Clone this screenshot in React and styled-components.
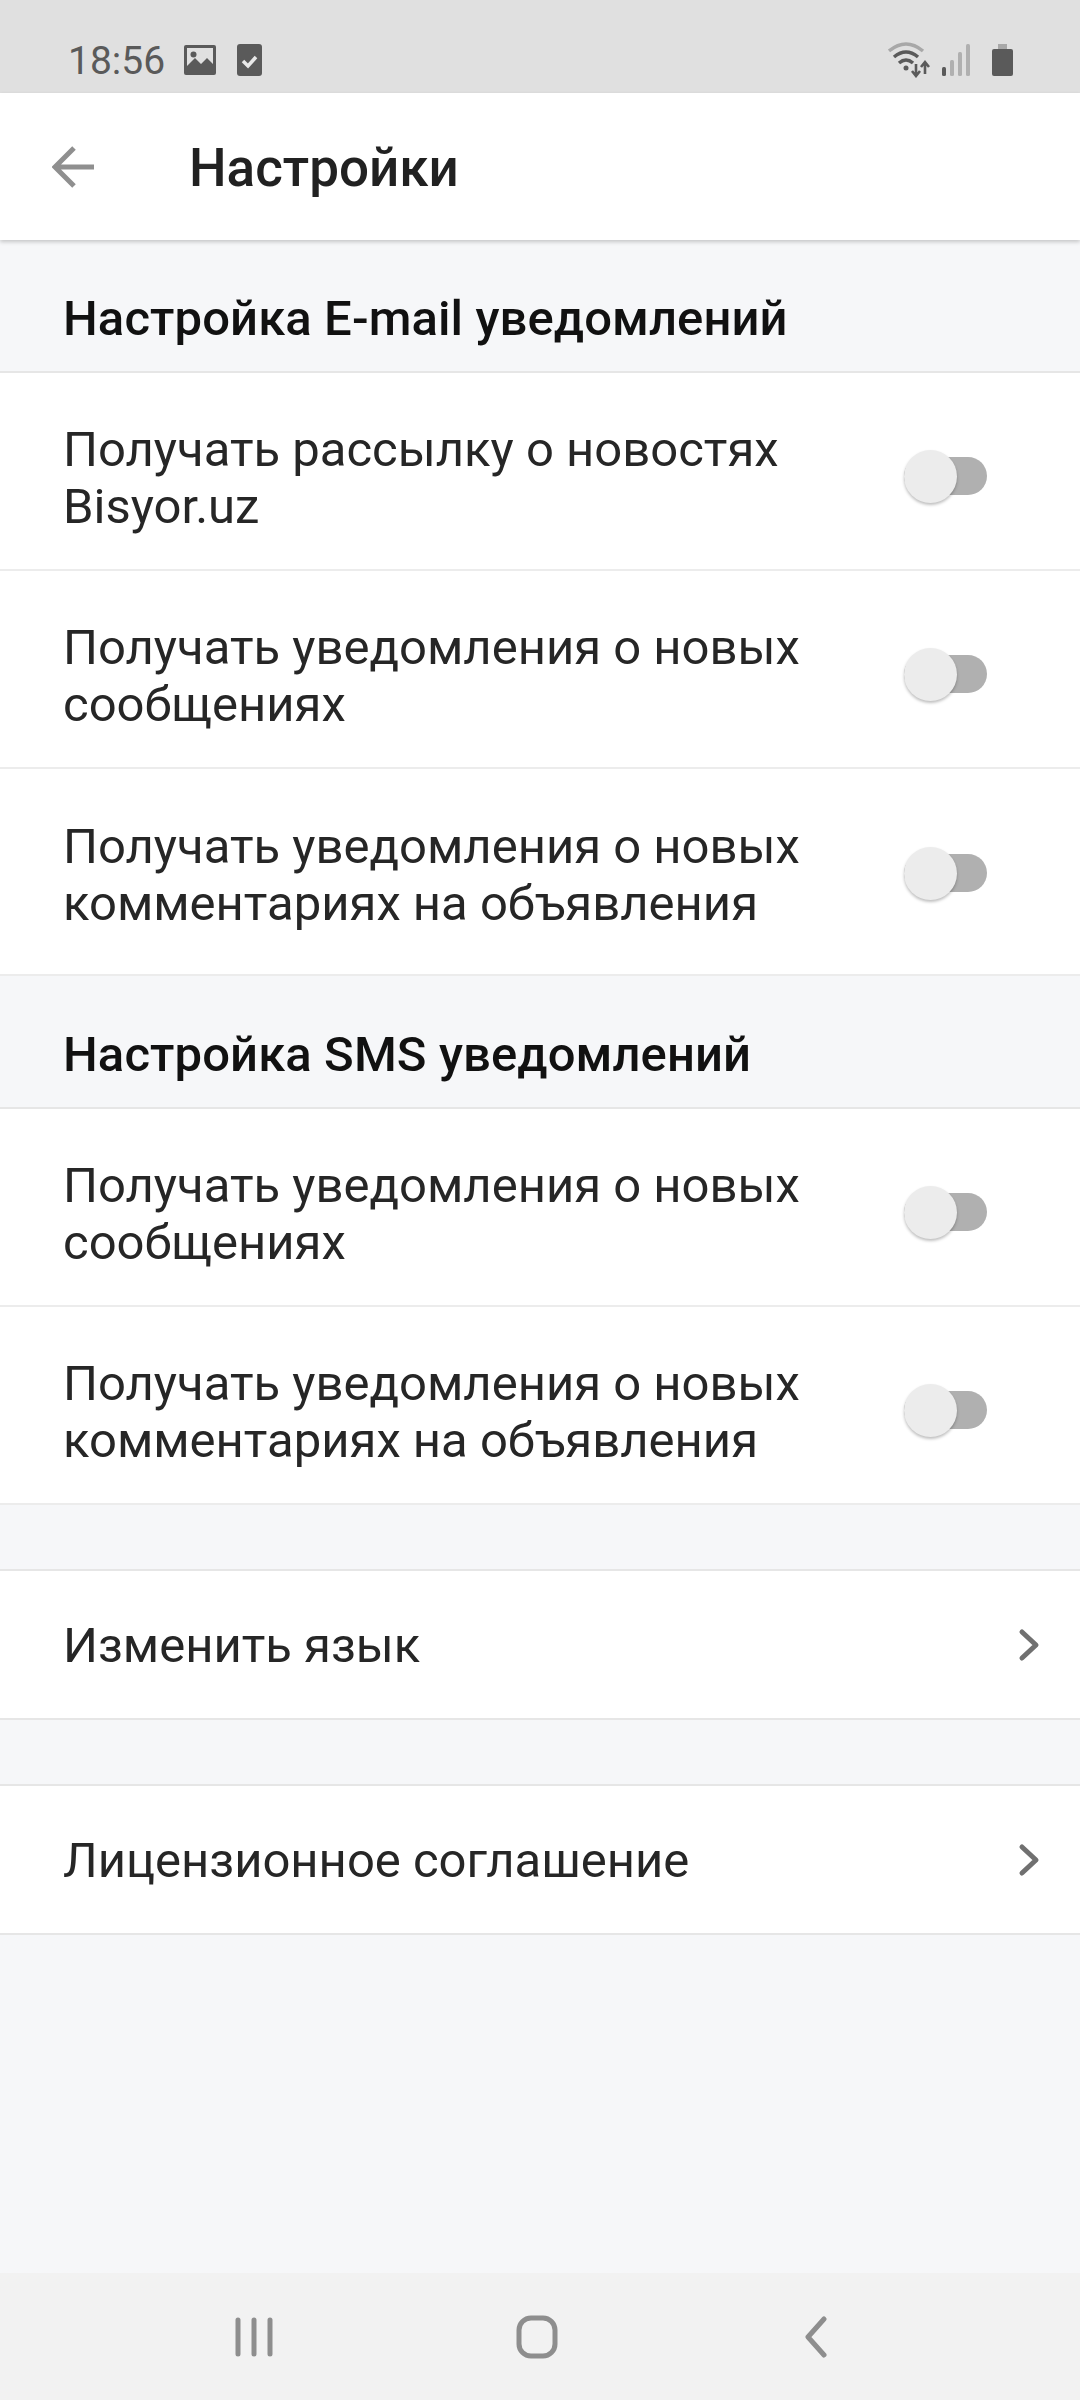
import React from 'react';
import styled, { createGlobalStyle } from 'styled-components';

const GlobalStyle = createGlobalStyle`
  html, body {
    margin: 0;
    padding: 0;
    background: #f6f7f9;
    font-family: Roboto, "Noto Sans", sans-serif;
  }
`;

const Toggle = () => (
    <Switch>
        <Knob />
    </Switch>
);

const Chevron = () => (
    <svg width="30" height="36" viewBox="0 0 30 36">
        <path d="M6 5 L20 18 L6 31" fill="none" stroke="#707070" strokeWidth="5" strokeLinecap="round" strokeLinejoin="round" />
    </svg>
);

const SwitchRow = ({ text, tall }) => (
    <Row $tall={tall}>
        <RowText>{text}</RowText>
        <Toggle />
    </Row>
);

const LinkRow = ({ text }) => (
    <Link>
        <LinkText>{text}</LinkText>
        <Chevron />
    </Link>
);

const App = () => {
    return (
        <Screen>
            <GlobalStyle />
            <StatusBar>
                <Time>18:56</Time>
                <svg width="32" height="30" viewBox="0 0 32 30" style={{ marginLeft: 19 }}>
                    <rect width="32" height="30" rx="2" fill="#5a5a5a" />
                    <rect x="3" y="3" width="26" height="20" fill="#e0e0e0" />
                    <circle cx="9.5" cy="9.5" r="3" fill="#5a5a5a" />
                    <path d="M3 21 L11 13 L17 19 L23 13 L29 19 V24 H3 Z" fill="#5a5a5a" />
                </svg>
                <svg width="25" height="32" viewBox="0 0 25 32" style={{ marginLeft: 21 }}>
                    <rect width="25" height="32" rx="3" fill="#5a5a5a" />
                    <path d="M6 17 L11 22 L19 13" fill="none" stroke="#e8e8e8" strokeWidth="3.5" />
                </svg>
                <StatusRight>
                    <svg width="44" height="36" viewBox="0 0 44 36">
                        <path d="M1 9 Q18 -5 35 9" fill="none" stroke="#a8a8a8" strokeWidth="3.5" />
                        <path d="M6 15 Q18 5 30 15" fill="none" stroke="#5a5a5a" strokeWidth="3.5" />
                        <path d="M11 21 Q18 15 25 21" fill="none" stroke="#5a5a5a" strokeWidth="3.5" />
                        <circle cx="18" cy="26" r="2.5" fill="#5a5a5a" />
                        <path d="M28 22 V34 M24 29 L28 34 L32 29" fill="none" stroke="#5a5a5a" strokeWidth="2.6" />
                        <path d="M37 32 V20 M33 25 L37 20 L41 25" fill="none" stroke="#5a5a5a" strokeWidth="2.6" />
                    </svg>
                    <svg width="30" height="32" viewBox="0 0 30 32" style={{ marginLeft: 10 }}>
                        <rect x="0" y="23" width="4" height="9" rx="1.5" fill="#5a5a5a" />
                        <rect x="8" y="16" width="4" height="16" rx="1.5" fill="#b0b0b0" />
                        <rect x="16" y="8" width="4" height="24" rx="1.5" fill="#b0b0b0" />
                        <rect x="24" y="0" width="4" height="32" rx="1.5" fill="#b0b0b0" />
                    </svg>
                    <svg width="21" height="32" viewBox="0 0 21 32" style={{ marginLeft: 20 }}>
                        <rect x="6" y="0" width="9" height="6" fill="#a8a8a8" />
                        <rect x="0" y="5" width="21" height="27" rx="2" fill="#5a5a5a" />
                    </svg>
                </StatusRight>
            </StatusBar>

            <AppBar>
                <svg width="42" height="42" viewBox="0 0 42 42">
                    <path d="M42 21 H3 M22 2 L3 21 L22 40" fill="none" stroke="#8f8f8f" strokeWidth="5" />
                </svg>
                <Title>Настройки</Title>
            </AppBar>

            <Section>Настройка E-mail уведомлений</Section>
            <SwitchRow text={<>Получать рассылку о новостях<br />Bisyor.uz</>} />
            <SwitchRow text={<>Получать уведомления о новых<br />сообщениях</>} />
            <SwitchRow tall text={<>Получать уведомления о новых<br />комментариях на объявления</>} />

            <Section>Настройка SMS уведомлений</Section>
            <SwitchRow text={<>Получать уведомления о новых<br />сообщениях</>} />
            <SwitchRow text={<>Получать уведомления о новых<br />комментариях на объявления</>} />

            <Gap />
            <LinkRow text="Изменить язык" />
            <Gap />
            <LinkRow text="Лицензионное соглашение" />

            <Spacer />

            <NavBar>
                <svg width="40" height="40" viewBox="0 0 40 40">
                    <path d="M4 3 V37 M20 3 V37 M36 3 V37" stroke="#8e8e8e" strokeWidth="5" strokeLinecap="round" />
                </svg>
                <svg width="42" height="44" viewBox="0 0 42 44">
                    <rect x="3" y="3" width="36" height="38" rx="12" fill="none" stroke="#8e8e8e" strokeWidth="5" />
                </svg>
                <svg width="24" height="42" viewBox="0 0 24 42" style={{ marginLeft: 4 }}>
                    <path d="M20 3 L4 21 L20 39" fill="none" stroke="#8e8e8e" strokeWidth="5" strokeLinecap="round" strokeLinejoin="round" />
                </svg>
            </NavBar>
        </Screen>
    );
};

const Screen = styled.div`
  width: 1080px;
  height: 2400px;
  display: flex;
  flex-direction: column;
  background: #f6f7f9;
  overflow: hidden;
`;

const StatusBar = styled.div`
  height: 93px;
  flex: none;
  box-sizing: border-box;
  padding: 26px 36px 0 68px;
  display: flex;
  align-items: center;
  background: #e0e0e0;
`;

const Time = styled.span`
  margin-top: 3px;
  font-size: 39px;
  color: #5a5a5a;
`;

const StatusRight = styled.div`
  margin-left: auto;
  display: flex;
  align-items: center;
  margin-right: 31px;
`;

const AppBar = styled.div`
  height: 147px;
  flex: none;
  box-sizing: border-box;
  padding: 0 0 0 52px;
  display: flex;
  align-items: center;
  background: #fff;
  box-shadow: 0 2px 4px rgba(0, 0, 0, 0.2);
  position: relative;
`;

const Title = styled.h1`
  margin: 2px 0 0 95px;
  font-size: 53px;
  font-weight: 500;
  color: #212121;
`;

const Section = styled.div`
  height: 133px;
  flex: none;
  box-sizing: border-box;
  padding: 50px 63px 0;
  font-size: 49px;
  font-weight: 500;
  letter-spacing: 0.1px;
  line-height: 58px;
  color: #111;
  border-bottom: 2px solid #e6e6e6;
`;

const Row = styled.div`
  height: ${(p) => (p.$tall ? 207 : 198)}px;
  flex: none;
  box-sizing: border-box;
  padding: ${(p) => (p.$tall ? 2 : 10)}px 93px 0 63px;
  display: flex;
  align-items: center;
  justify-content: space-between;
  background: #fff;
  border-bottom: 2px solid #ececec;
`;

const RowText = styled.div`
  font-size: 49px;
  line-height: 57px;
  margin-top: 4px;
  color: #262626;
`;

const Switch = styled.div`
  width: 83px;
  height: 38px;
  flex: none;
  border-radius: 19px;
  background: #b0b0b0;
  position: relative;
`;

const Knob = styled.div`
  position: absolute;
  left: 0;
  top: -7px;
  width: 53px;
  height: 53px;
  border-radius: 50%;
  background: #ececec;
  box-shadow: 0 2px 3px rgba(0, 0, 0, 0.25);
`;

const Gap = styled.div`
  height: 66px;
  flex: none;
  border-bottom: 2px solid #e6e6e6;
  box-sizing: border-box;
`;

const Link = styled.div`
  height: 149px;
  flex: none;
  box-sizing: border-box;
  padding: 0 34px 0 63px;
  display: flex;
  align-items: center;
  justify-content: space-between;
  background: #fff;
  border-bottom: 2px solid #e6e6e6;
`;

const LinkText = styled.div`
  margin-top: 2px;
  font-size: 49px;
  color: #262626;
`;

const Spacer = styled.div`
  flex: 1;
`;

const NavBar = styled.div`
  height: 127px;
  flex: none;
  box-sizing: border-box;
  padding: 0 0 0 234px;
  display: flex;
  align-items: center;
  gap: 242px;
  background: #f2f2f2;
`;

export default App;
